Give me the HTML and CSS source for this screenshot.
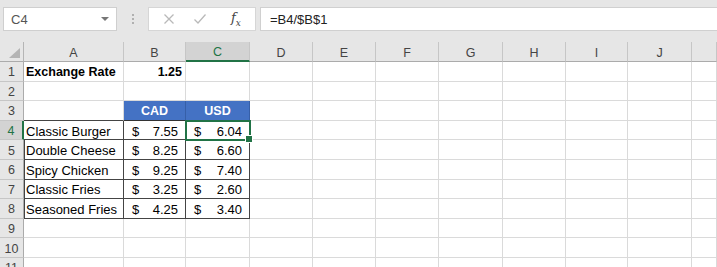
FILE: index.html
```html
<!DOCTYPE html>
<html>
<head>
<meta charset="utf-8">
<link rel="stylesheet" href="styles.css">
</head>
<body>
<div class="toolbar">
  <div class="namebox"><span>C4</span><span class="caret"></span></div>
  <div class="grip"><i></i><i></i><i></i></div>
  <div class="fbuttons">
    <svg class="ic" width="12" height="12" viewBox="0 0 12 12"><path d="M1.5 1.5 L10.5 10.5 M10.5 1.5 L1.5 10.5" stroke="#b9b9b9" stroke-width="1.3" fill="none"/></svg>
    <svg class="ic" width="14" height="12" viewBox="0 0 14 12"><path d="M1.5 6.5 L5 10 L12.5 1.5" stroke="#b9b9b9" stroke-width="1.3" fill="none"/></svg>
    <span class="fx">f<sub>x</sub></span>
  </div>
  <div class="finput">=B4/$B$1</div>
</div>
<div class="sheet">
  <div class="corner"><svg width="24" height="20" viewBox="0 0 24 20"><polygon points="20,6 20,16 9,16" fill="#b4b4b4"/></svg></div>
  <div class="ch">A</div><div class="ch">B</div><div class="ch sel-h">C</div><div class="ch">D</div><div class="ch">E</div><div class="ch">F</div><div class="ch">G</div><div class="ch">H</div><div class="ch">I</div><div class="ch">J</div><div class="ch"></div>

  <div class="rh">1</div><div class="c b">Exchange Rate</div><div class="c b r">1.25</div><div class="c"></div><div class="c"></div><div class="c"></div><div class="c"></div><div class="c"></div><div class="c"></div><div class="c"></div><div class="c"></div><div class="c"></div>

  <div class="rh">2</div><div class="c"></div><div class="c"></div><div class="c"></div><div class="c"></div><div class="c"></div><div class="c"></div><div class="c"></div><div class="c"></div><div class="c"></div><div class="c"></div><div class="c"></div>

  <div class="rh">3</div><div class="c tbb"></div><div class="c blue">CAD</div><div class="c blue">USD</div><div class="c"></div><div class="c"></div><div class="c"></div><div class="c"></div><div class="c"></div><div class="c"></div><div class="c"></div><div class="c"></div>

  <div class="rh sel-r">4</div><div class="c tb">Classic Burger</div><div class="c tb acc"><span>$</span><span>7.55</span></div><div class="c tb acc selc"><span>$</span><span>6.04</span></div><div class="c"></div><div class="c"></div><div class="c"></div><div class="c"></div><div class="c"></div><div class="c"></div><div class="c"></div><div class="c"></div>

  <div class="rh">5</div><div class="c tb tl">Double Cheese</div><div class="c tb acc"><span>$</span><span>8.25</span></div><div class="c tb acc"><span>$</span><span>6.60</span></div><div class="c"></div><div class="c"></div><div class="c"></div><div class="c"></div><div class="c"></div><div class="c"></div><div class="c"></div><div class="c"></div>

  <div class="rh">6</div><div class="c tb tl">Spicy Chicken</div><div class="c tb acc"><span>$</span><span>9.25</span></div><div class="c tb acc"><span>$</span><span>7.40</span></div><div class="c"></div><div class="c"></div><div class="c"></div><div class="c"></div><div class="c"></div><div class="c"></div><div class="c"></div><div class="c"></div>

  <div class="rh">7</div><div class="c tb tl">Classic Fries</div><div class="c tb acc"><span>$</span><span>3.25</span></div><div class="c tb acc"><span>$</span><span>2.60</span></div><div class="c"></div><div class="c"></div><div class="c"></div><div class="c"></div><div class="c"></div><div class="c"></div><div class="c"></div><div class="c"></div>

  <div class="rh">8</div><div class="c tb tl">Seasoned Fries</div><div class="c tb acc"><span>$</span><span>4.25</span></div><div class="c tb acc"><span>$</span><span>3.40</span></div><div class="c"></div><div class="c"></div><div class="c"></div><div class="c"></div><div class="c"></div><div class="c"></div><div class="c"></div><div class="c"></div>

  <div class="rh">9</div><div class="c"></div><div class="c"></div><div class="c"></div><div class="c"></div><div class="c"></div><div class="c"></div><div class="c"></div><div class="c"></div><div class="c"></div><div class="c"></div><div class="c"></div>

  <div class="rh">10</div><div class="c"></div><div class="c"></div><div class="c"></div><div class="c"></div><div class="c"></div><div class="c"></div><div class="c"></div><div class="c"></div><div class="c"></div><div class="c"></div><div class="c"></div>

  <div class="rh">11</div><div class="c"></div><div class="c"></div><div class="c"></div><div class="c"></div><div class="c"></div><div class="c"></div><div class="c"></div><div class="c"></div><div class="c"></div><div class="c"></div><div class="c"></div>
</div>
</body>
</html>
```

FILE: styles.css
```css
* { box-sizing: border-box; }
html, body { margin: 0; padding: 0; }
body {
  width: 717px;
  height: 267px;
  overflow: hidden;
  background: #e6e6e6;
  font-family: "Liberation Sans", Arial, sans-serif;
  font-size: 12.5px;
  color: #000;
}
.toolbar {
  height: 42px;
  display: flex;
  align-items: flex-start;
  padding-top: 7px;
  padding-left: 3px;
  background: #e6e6e6;
}
.namebox {
  width: 114px;
  height: 24px;
  background: #fff;
  border: 1px solid #cfcfcf;
  display: flex;
  align-items: center;
  justify-content: space-between;
  padding: 0 7px 0 7px;
  color: #555;
  font-size: 13px;
}
.caret {
  width: 0; height: 0;
  border-left: 4px solid transparent;
  border-right: 4px solid transparent;
  border-top: 4px solid #777;
}
.grip {
  width: 31px;
  height: 24px;
  display: flex;
  flex-direction: column;
  align-items: center;
  justify-content: center;
  gap: 2px;
}
.grip i { display: block; width: 2px; height: 2px; background: #b0b0b0; }
.fbuttons {
  width: 108px;
  height: 24px;
  background: #fff;
  border: 1px solid #d6d6d6;
  display: flex;
  align-items: center;
  padding-left: 14px;
  gap: 18px;
}
.fx {
  font-family: "DejaVu Serif", "Liberation Serif", serif;
  font-style: italic;
  font-size: 13px;
  color: #444;
  margin-left: 6px;
}
.fx sub { font-size: 9px; }
.finput {
  flex: 1;
  height: 24px;
  margin-left: 4px;
  background: #fff;
  border: 1px solid #d0d0d0;
  border-right: none;
  padding-left: 9px;
  display: flex;
  align-items: center;
  font-size: 13px;
  color: #222;
}
.sheet {
  display: grid;
  grid-template-columns: 24px 100px 62px 64px 63px 63px 63px 64px 63px 62px 64px 1fr;
  grid-template-rows: 20px;
  grid-auto-rows: 19.6px;
  background: #fff;
}
.corner {
  background: #e6e6e6;
  border-right: 1px solid #b5b5b5;
  border-bottom: 1px solid #ababab;
}
.corner svg { display: block; }
.ch {
  background: #e6e6e6;
  border-right: 1px solid #c6c6c6;
  border-bottom: 1px solid #ababab;
  color: #444;
  display: flex;
  align-items: center;
  justify-content: center;
  padding-top: 2px;
}
.ch.sel-h {
  background: #d3d3d3;
  border-bottom: 2px solid #217346;
  color: #217346;
}
.rh {
  background: #e6e6e6;
  border-right: 1px solid #ababab;
  border-bottom: 1px solid #c6c6c6;
  color: #444;
  display: flex;
  align-items: center;
  justify-content: center;
  padding-top: 2px;
}
.rh.sel-r {
  background: #d3d3d3;
  border-right: 2px solid #217346;
  color: #217346;
}
.c {
  border-right: 1px solid #dadada;
  border-bottom: 1px solid #dadada;
  display: flex;
  align-items: center;
  padding: 2px 2px 0 2px;
  white-space: nowrap;
  overflow: visible;
  font-size: 13px;
}
.b { font-weight: bold; font-size: 12.5px; }
.r { justify-content: flex-end; padding-right: 3px; }
.tbb { border-bottom-color: #444; }
.blue {
  background: #4472c4;
  color: #fff;
  font-weight: bold;
  font-size: 12.5px;
  justify-content: center;
  border-right-color: #365fa8;
  border-bottom-color: #333;
}
.tb {
  border-right-color: #444;
  border-bottom-color: #444;
}
.tl { box-shadow: inset 1px 0 0 #444; }
.acc {
  justify-content: space-between;
  padding: 2px 7px 0 8px;
}
.selc {
  position: relative;
  outline: 2px solid #217346;
  outline-offset: -1px;
  z-index: 2;
}
.selc::after {
  content: "";
  position: absolute;
  right: -4px;
  bottom: -4px;
  width: 6px;
  height: 6px;
  background: #217346;
  border: 1px solid #fff;
}
```
